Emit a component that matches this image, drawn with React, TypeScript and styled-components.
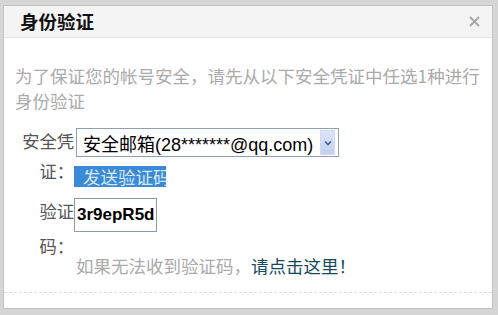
import React from "react";
import styled, { createGlobalStyle } from "styled-components";

const Global = createGlobalStyle`
  html, body { margin: 0; padding: 0; }
  body {
    background: #d6d6d6;
    width: 498px;
    height: 315px;
    overflow: hidden;
    font-family: "Liberation Sans", "Noto Sans CJK SC", sans-serif;
  }
`;

const Dialog = styled.div`
  box-sizing: border-box;
  margin: 5px 5px 0 3px;
  width: 490px;
  height: 304px;
  background: #fff;
  border: 1px solid #c2c2c2;
  display: flex;
  flex-direction: column;
`;

const Header = styled.div`
  height: 31px;
  flex: none;
  background: #f4f4f4;
  border-bottom: 1px solid #e2e2e2;
  display: flex;
  align-items: center;
  justify-content: space-between;
  padding: 0 12px 0 16px;
`;

const Title = styled.div`
  font-family: "Noto Sans CJK SC", sans-serif;
  font-weight: 700;
  font-size: 18.5px;
  color: #111;
  line-height: 31px;
`;

const Close = styled.button`
  border: 0;
  background: transparent;
  padding: 0;
  width: 12px;
  height: 12px;
  display: flex;
  align-items: center;
  justify-content: center;
  cursor: pointer;
`;

const Body = styled.div`
  padding: 25px 0 0 11px;
`;

const Desc = styled.p`
  margin: 0;
  font-family: "Noto Sans CJK SC", sans-serif;
  font-size: 17.5px;
  line-height: 25px;
  color: #aaaaaa;
  width: 480px;
  white-space: nowrap;
`;

const Row = styled.div<{ $mt: number }>`
  display: flex;
  align-items: flex-start;
  margin-top: ${(p) => p.$mt}px;
  padding-left: 6px;
`;

const Label = styled.div<{ $lh: number }>`
  width: 53px;
  flex: none;
  text-align: right;
  font-family: "Noto Sans CJK SC", sans-serif;
  font-size: 17.3px;
  line-height: ${(p) => p.$lh}px;
  color: #555;
  word-break: break-all;
`;

const Controls = styled.div`
  display: flex;
  flex-direction: column;
  align-items: flex-start;
`;

const Select = styled.div`
  box-sizing: border-box;
  margin: 2px 0 0 2px;
  width: 263px;
  height: 29px;
  border: 1px solid #8aa0b8;
  background: #fff;
  display: flex;
  align-items: center;
  justify-content: space-between;
  padding: 0 3px 0 6px;
  font-size: 18px;
  color: #000;
  white-space: nowrap;
`;

const Arrow = styled.span`
  width: 15px;
  height: 25px;
  background: linear-gradient(#dbe3f7, #c4d1f0);
  border: 1px solid #d0daf2;
  box-sizing: border-box;
  display: flex;
  align-items: center;
  justify-content: center;
`;

const SendButton = styled.button`
  margin-top: 9px;
  width: 92px;
  height: 21px;
  overflow: hidden;
  border: 0;
  padding: 0 0 0 9px;
  background: #3c8ad6;
  color: #d6e8f9;
  font-family: "Noto Sans CJK SC", sans-serif;
  font-size: 17.5px;
  line-height: 21px;
  text-align: left;
  white-space: nowrap;
  cursor: pointer;
`;

const CodeInput = styled.input`
  box-sizing: border-box;
  margin-top: 5px;
  width: 83px;
  height: 34px;
  border: 1px solid #8c9aa6;
  padding: 0 0 0 2px;
  font-family: "Liberation Sans", sans-serif;
  font-weight: 700;
  font-size: 17px;
  color: #000;
  outline: none;
`;

const Help = styled.div`
  margin-top: 19px;
  margin-left: 2px;
  font-family: "Noto Sans CJK SC", sans-serif;
  font-size: 17.5px;
  line-height: 30px;
  color: #aaaaaa;
  white-space: nowrap;
`;

const HelpLink = styled.a`
  color: #17495a;
  text-decoration: none;
  cursor: pointer;
`;

const Footer = styled.div`
  flex: 1;
  margin-top: 11px;
  border-top: 1px dashed #dadada;
`;

export default function App() {
  return (
    <>
      <Global />
      <Dialog>
        <Header>
          <Title>身份验证</Title>
          <Close aria-label="关闭">
            <svg width="11" height="11" viewBox="0 0 11 11">
              <path d="M1 1L10 10M10 1L1 10" stroke="#a8a8a8" strokeWidth="2" />
            </svg>
          </Close>
        </Header>
        <Body>
          <Desc>
            为了保证您的帐号安全，请先从以下安全凭证中任选1种进行
            <br />
            身份验证
          </Desc>
          <Row $mt={13}>
            <Label $lh={30}>安全凭证：</Label>
            <Controls>
              <Select>
                <span>安全邮箱(28*******@qq.com)</span>
                <Arrow>
                  <svg width="8" height="6" viewBox="0 0 8 6">
                    <path d="M1 1.5L4 4.5L7 1.5" stroke="#4d5f8a" strokeWidth="1.6" fill="none" />
                  </svg>
                </Arrow>
              </Select>
              <SendButton>发送验证码</SendButton>
            </Controls>
          </Row>
          <Row $mt={6}>
            <Label $lh={35}>验证码：</Label>
            <Controls>
              <CodeInput defaultValue="3r9epR5d" />
              <Help>
                如果无法收到验证码，<HelpLink>请点击这里！</HelpLink>
              </Help>
            </Controls>
          </Row>
        </Body>
        <Footer />
      </Dialog>
    </>
  );
}
